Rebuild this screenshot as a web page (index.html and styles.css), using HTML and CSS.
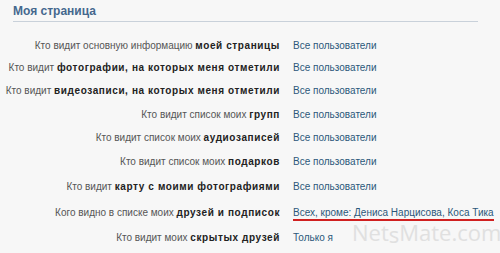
FILE: index.html
```html
<!DOCTYPE html>
<html lang="ru">
<head>
<meta charset="utf-8">
<link rel="stylesheet" href="styles.css">
</head>
<body>
<div class="page">
  <div class="header">Моя страница</div>
  <div class="rows">
    <div class="label">Кто видит основную информацию <b>моей страницы</b></div><div class="value">Все пользователи</div>
    <div class="label">Кто видит <b>фотографии, на которых меня отметили</b></div><div class="value">Все пользователи</div>
    <div class="label">Кто видит <b>видеозаписи, на которых меня отметили</b></div><div class="value">Все пользователи</div>
    <div class="label">Кто видит список моих <b>групп</b></div><div class="value">Все пользователи</div>
    <div class="label">Кто видит список моих <b>аудиозаписей</b></div><div class="value">Все пользователи</div>
    <div class="label">Кто видит список моих <b>подарков</b></div><div class="value">Все пользователи</div>
    <div class="label">Кто видит <b>карту с моими фотографиями</b></div><div class="value">Все пользователи</div>
    <div class="label">Кого видно в списке моих <b>друзей и подписок</b></div><div class="value"><span class="marked">Всех, кроме: Дениса Нарцисова, Коса Тика</span></div>
    <div class="label">Кто видит моих <b>скрытых друзей</b></div><div class="value">Только я</div>
  </div>
  <div class="watermark">Net<span class="wm-s">s</span>Mate.com</div>
</div>
</body>
</html>
```
FILE: styles.css
```css
html, body {
  margin: 0;
  padding: 0;
  background: #f7f7f7;
}
.page {
  position: relative;
  width: 500px;
  height: 253px;
  overflow: hidden;
  font-family: "Liberation Sans", Arial, sans-serif;
  font-size: 10px;
  color: #444;
}
.header {
  margin: 0 22px 0 13px;
  padding-top: 4px;
  height: 17px;
  font-weight: bold;
  font-size: 12px;
  color: #45688e;
  border-bottom: 1px solid #c9d1da;
}
.rows {
  display: grid;
  grid-template-columns: 280px 1fr;
  grid-template-rows: 22px 23px 23px 24px 23px 24px 26px 26px 25px;
  align-items: center;
  margin-top: 12px;
}
.label {
  text-align: right;
  white-space: nowrap;
  color: #555;
}
.label b {
  color: #222;
  letter-spacing: 0.6px;
}
.value {
  padding-left: 13px;
  color: #2b587a;
  white-space: nowrap;
}
.marked {
  border-bottom: 2px solid #d02020;
  padding-bottom: 1px;
}
.watermark {
  position: absolute;
  left: 352px;
  top: 219px;
  font-family: "Open Sans", sans-serif;
  font-size: 22px;
  line-height: 26px;
  color: #e0e0e0;
}
.wm-s {
  position: relative;
  top: 2px;
}
```
